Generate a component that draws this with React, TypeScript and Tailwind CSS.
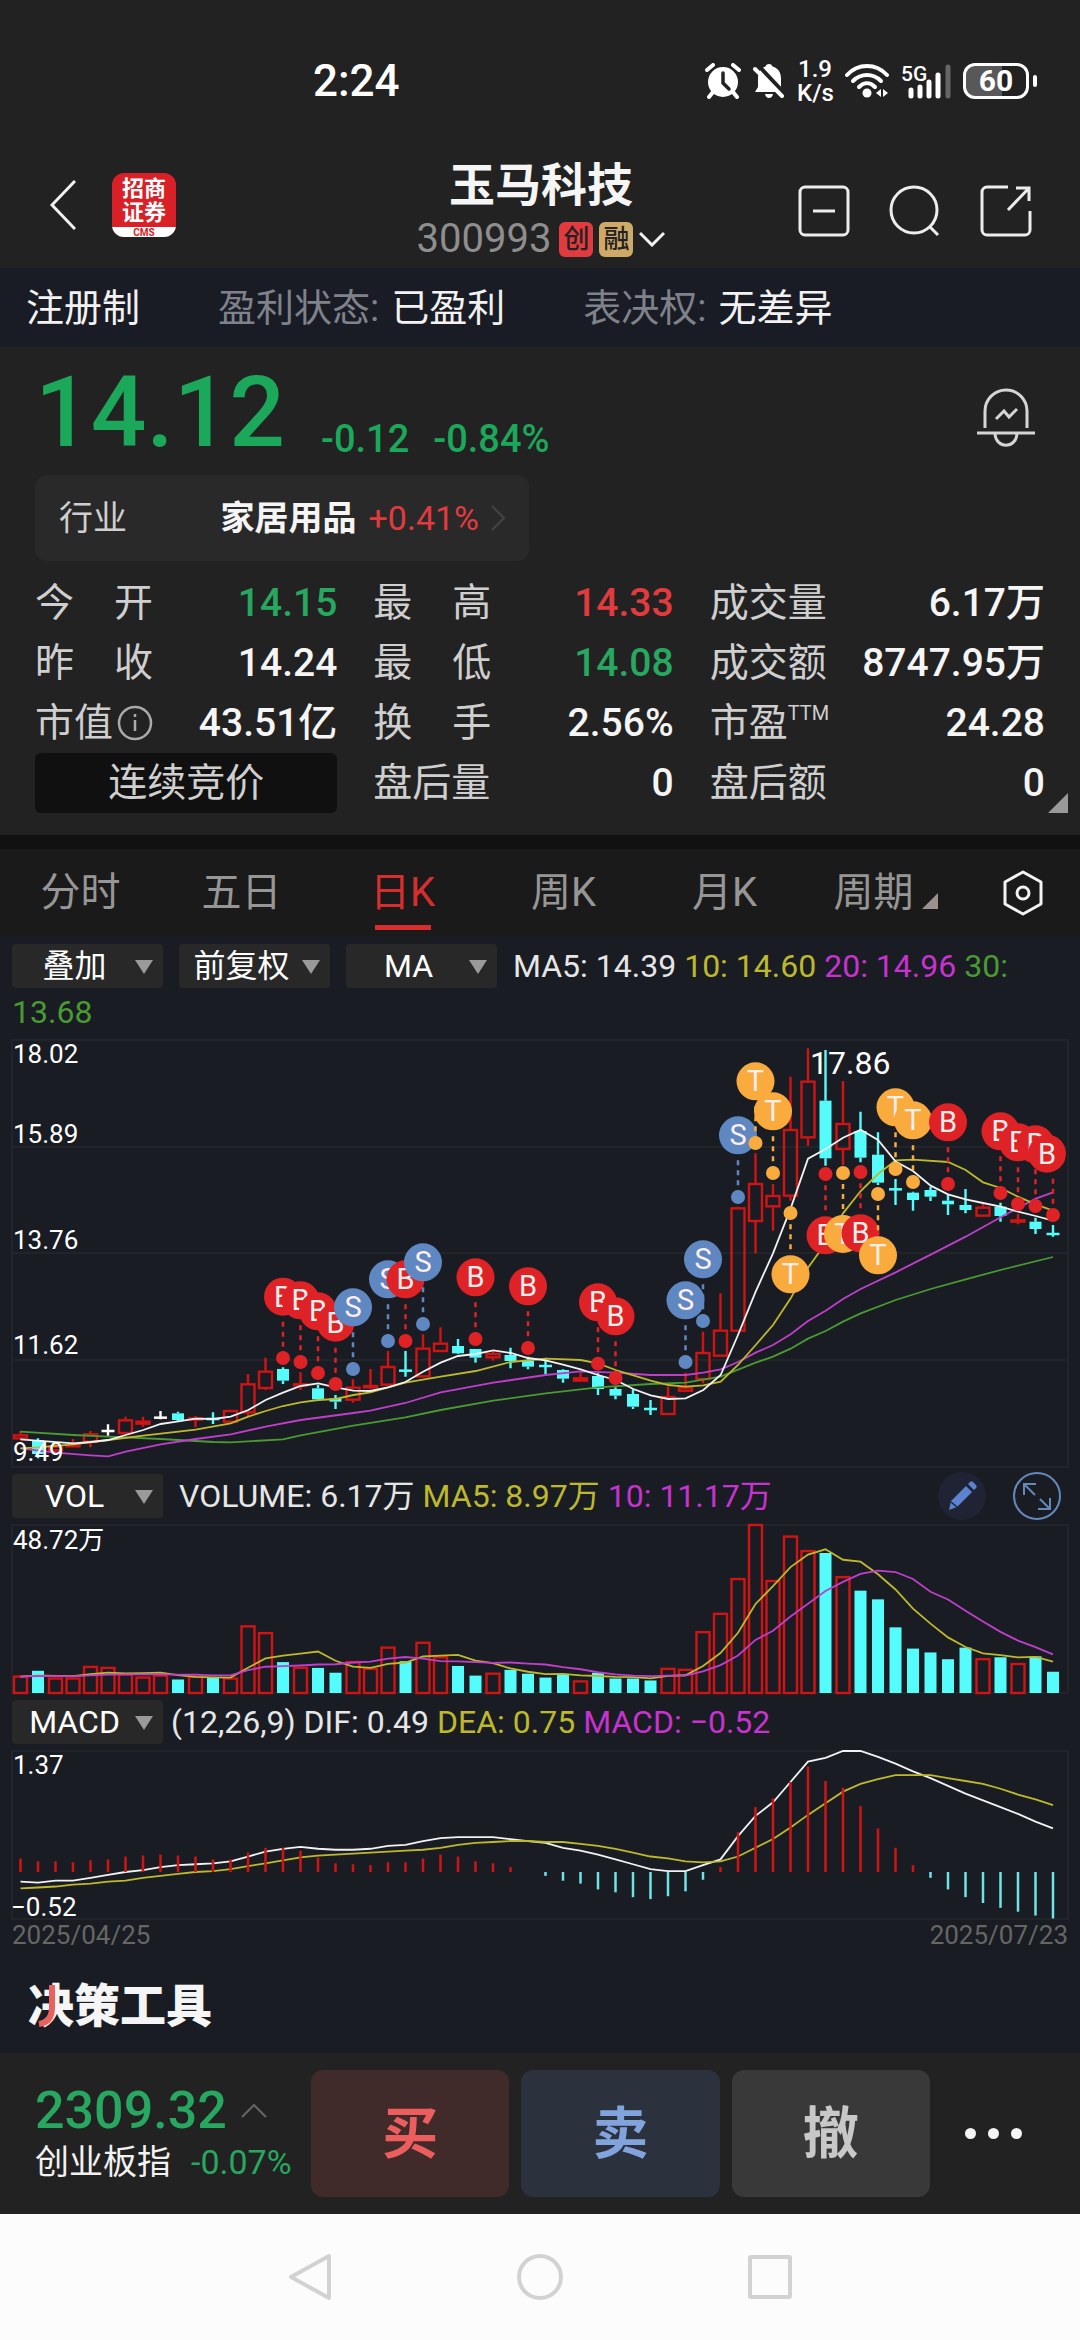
import type { ReactNode } from "react";

type Candle = [type: "up" | "down" | "flat", high: number, top: number, bottom: number, low: number];
type Point = [x: number, y: number];

const STEP = 17.5;
const barX = (i: number) => 20.5 + STEP * i;

// Candle levels are in thirds of a chart unit, measured from the top of the pane.
const candles: Candle[] = [
  ["up", 1203, 1213, 1228, 1230], ["down", 1225, 1230, 1272, 1285], ["up", 1240, 1247, 1264, 1270],
  ["up", 1227, 1243, 1247, 1250], ["up", 1203, 1210, 1238, 1252], ["flat", 1183, 1203, 1203, 1217],
  ["up", 1160, 1168, 1212, 1212], ["up", 1160, 1172, 1184, 1190], ["flat", 1143, 1163, 1163, 1168],
  ["down", 1145, 1150, 1170, 1176], ["up", 1158, 1162, 1172, 1192], ["down", 1147, 1167, 1167, 1182],
  ["up", 1140, 1140, 1178, 1178], ["up", 1032, 1060, 1150, 1158], ["up", 983, 1022, 1077, 1080],
  ["down", 1012, 1017, 1052, 1062], ["up", 1027, 1060, 1068, 1080], ["down", 1065, 1075, 1108, 1112],
  ["down", 1095, 1105, 1115, 1137], ["up", 1048, 1070, 1112, 1118], ["up", 1017, 1065, 1075, 1078],
  ["up", 963, 1008, 1067, 1067], ["down", 963, 1022, 1022, 1040], ["up", 913, 953, 1042, 1042],
  ["up", 892, 938, 966, 966], ["down", 927, 948, 970, 972], ["down", 957, 957, 983, 998],
  ["up", 965, 969, 985, 992], ["down", 953, 975, 993, 1015], ["down", 980, 992, 1010, 1018],
  ["down", 990, 1008, 1008, 1033], ["down", 1018, 1020, 1046, 1058], ["up", 1028, 1042, 1055, 1055],
  ["down", 1030, 1038, 1077, 1095], ["down", 1072, 1077, 1097, 1108], ["down", 1078, 1092, 1130, 1137],
  ["down", 1110, 1137, 1137, 1155], ["up", 1070, 1098, 1155, 1155], ["up", 1028, 1070, 1085, 1085],
  ["up", 905, 966, 1050, 1060], ["up", 790, 899, 980, 980], ["up", 530, 532, 905, 905],
  ["up", 370, 459, 576, 670], ["up", 462, 495, 532, 602], ["up", 140, 297, 500, 512],
  ["up", 55, 152, 325, 347], ["down", 60, 212, 385, 407], ["up", 153, 279, 360, 405],
  ["down", 245, 303, 383, 397], ["down", 307, 374, 458, 465], ["down", 447, 478, 478, 525],
  ["down", 485, 488, 510, 542], ["down", 470, 480, 500, 513], ["down", 495, 512, 523, 555],
  ["down", 477, 525, 540, 550], ["up", 522, 530, 560, 560], ["down", 518, 530, 558, 575],
  ["up", 552, 568, 578, 583], ["down", 563, 575, 597, 612], ["down", 585, 612, 612, 620],
];

const movingAverages: { color: string; points: Point[] }[] = [
  {
    color: "#4a9a32",
    points: [
      [61, 1205], [220, 1215], [325, 1220], [482, 1227], [640, 1236], [692, 1237], [849, 1228], [902, 1216],
      [1060, 1187], [1216, 1162], [1322, 1140], [1480, 1112], [1637, 1090], [1794, 1072], [1952, 1062],
      [2057, 1058], [2162, 1040], [2267, 998], [2319, 980], [2372, 956], [2424, 926], [2477, 903],
      [2529, 875], [2582, 850], [2687, 810], [2792, 777], [2897, 748], [3002, 720], [3159, 681],
    ],
  },
  {
    color: "#bf3fcb",
    points: [
      [61, 1255], [166, 1268], [272, 1276], [325, 1279], [377, 1265], [482, 1243], [587, 1227], [692, 1213],
      [797, 1190], [902, 1170], [1060, 1149], [1111, 1142], [1216, 1119], [1322, 1087], [1480, 1058],
      [1637, 1035], [1742, 1024], [1847, 1028], [1952, 1035], [2057, 1035], [2110, 1028], [2162, 1018],
      [2214, 996], [2267, 968], [2319, 945], [2372, 913], [2424, 873], [2477, 842], [2529, 807],
      [2582, 777], [2687, 727], [2792, 674], [2897, 620], [3002, 562], [3107, 506], [3159, 487],
    ],
  },
  {
    color: "#bdb92b",
    points: [
      [61, 1255], [114, 1252], [220, 1243], [325, 1230], [430, 1217], [587, 1199], [692, 1180], [745, 1160],
      [797, 1143], [849, 1128], [902, 1117], [955, 1110], [1007, 1107], [1060, 1095], [1111, 1087],
      [1216, 1058], [1322, 1040], [1427, 1023], [1532, 996], [1637, 986], [1742, 990], [1794, 1000],
      [1847, 1020], [1900, 1036], [1952, 1052], [2005, 1065], [2057, 1070], [2110, 1066], [2162, 1055],
      [2214, 1005], [2267, 945], [2319, 885], [2372, 805], [2424, 713], [2477, 640], [2529, 550],
      [2582, 483], [2634, 432], [2687, 391], [2739, 389], [2844, 396], [2897, 420], [2949, 457],
      [3002, 474], [3054, 500], [3107, 523], [3159, 542],
    ],
  },
  {
    color: "#f2f2f2",
    points: [
      [61, 1228], [220, 1240], [272, 1236], [325, 1230], [377, 1215], [430, 1200], [482, 1182], [535, 1174],
      [587, 1166], [640, 1167], [692, 1160], [745, 1140], [797, 1110], [849, 1088], [902, 1068], [955, 1060],
      [1007, 1072], [1060, 1082], [1111, 1083], [1164, 1072], [1216, 1056], [1269, 1025], [1322, 998],
      [1374, 978], [1427, 972], [1480, 961], [1532, 969], [1584, 984], [1637, 991], [1689, 1004],
      [1742, 1018], [1794, 1035], [1847, 1050], [1900, 1077], [1952, 1096], [2005, 1107], [2057, 1105],
      [2110, 1080], [2162, 1035], [2214, 915], [2267, 785], [2319, 670], [2372, 535], [2424, 386],
      [2477, 357], [2529, 323], [2582, 299], [2634, 330], [2687, 395], [2739, 423], [2792, 467],
      [2844, 493], [2897, 508], [2949, 519], [3002, 530], [3054, 545], [3107, 558], [3159, 572],
    ],
  },
];

const markerColors = { B: "#df2225", S: "#5f88c2", T: "#f9ab3e" };

// B = bought, S = sold, T = both on the same day
const markers: [kind: "B" | "S" | "T", index: number, badge: number, dot: number][] = [
  ["B", 15, 800, 984], ["B", 16, 811, 996], ["B", 17, 844, 1029], ["B", 18, 878, 1062], ["S", 19, 832, 1017],
  ["S", 21, 748, 933], ["B", 22, 748, 933], ["S", 23, 697, 882], ["B", 26, 742, 927], ["B", 29, 769, 954],
  ["B", 33, 817, 1001], ["B", 34, 859, 1044], ["S", 38, 811, 996], ["S", 39, 688, 873], ["S", 41, 316, 501],
  ["T", 42, 154, 339], ["T", 43, 244, 429], ["T", 44, 733, 549], ["B", 46, 616, 432], ["T", 47, 612, 429],
  ["B", 48, 610, 426], ["T", 49, 676, 492], ["T", 50, 232, 417], ["T", 51, 271, 456], ["B", 53, 277, 462],
  ["B", 56, 304, 489], ["B", 57, 337, 522], ["B", 58, 343, 528], ["B", 59, 371, 555],
];

const volumes = [
  17, 23, 15, 15, 27, 26, 19, 16, 18, 14, 17, 16, 15, 69, 62, 32, 26, 26, 21, 32,
  25, 47, 33, 52, 37, 28, 18, 20, 24, 20, 16, 19, 12, 21, 15, 15, 13, 25, 24, 63,
  82, 118, 174, 116, 162, 147, 145, 120, 106, 97, 68, 46, 42, 35, 47, 35, 37, 30, 38, 22,
];

const macdBars = [
  14, 11, 11, 10, 12, 13, 16, 17, 18, 17, 16, 13, 13, 20, 25, 25, 22, 15, 9, 8,
  7, 10, 10, 14, 18, 16, 11, 9, 5, 0, -4, -9, -12, -18, -21, -26, -28, -25, -20, -8,
  5, 41, 67, 76, 93, 109, 94, 87, 68, 45, 25, 7, -6, -18, -26, -32, -37, -41, -45, -48,
];

const difLine = [
  -10, -11, -9, -9, -6, -3, 0, 2, 5, 7, 8, 9, 11, 16, 21, 24, 26, 24, 23, 23,
  24, 27, 28, 32, 35, 36, 36, 36, 34, 32, 30, 25, 22, 18, 13, 8, 3, 1, 1, 7,
  13, 37, 58, 72, 93, 114, 118, 125, 125, 119, 112, 104, 97, 89, 81, 74, 67, 60, 52, 45,
];

const deaLine = [
  -17, -16, -15, -13, -12, -10, -9, -6, -4, -2, 0, 1, 3, 6, 9, 12, 15, 17, 18, 19,
  20, 21, 22, 23, 25, 28, 30, 31, 32, 32, 31, 31, 29, 27, 24, 20, 16, 14, 11, 10,
  11, 16, 25, 34, 46, 59, 71, 83, 91, 96, 100, 100, 100, 97, 94, 91, 86, 80, 75, 69,
];

function average(values: number[], window: number) {
  const padded = [...Array(window - 1).fill(17), ...values];
  return values.map((_, i) => padded.slice(i, i + window).reduce((a, b) => a + b, 0) / window);
}

const toPolyline = (ys: number[]) => ys.map((y, i) => `${barX(i)},${y}`).join(" ");

function StatusBar() {
  return (
    <div className="flex h-[162px] items-center justify-between pl-[313px] pr-[43px] text-white">
      <span className="text-[44px] font-medium leading-none">2:24</span>
      <div className="flex items-center">
        <svg viewBox="0 0 36 36" className="mr-3 h-9 w-9" aria-hidden="true">
          <circle cx="18" cy="19" r="15" fill="#fff" />
          <path d="M2 7 8 2M34 7 28 2" stroke="#fff" strokeWidth="4" strokeLinecap="round" />
          <path d="M8 29 4 34M28 29 32 34" stroke="#fff" strokeWidth="4" strokeLinecap="round" />
          <path d="M18 10v10l6 6" stroke="#222" strokeWidth="3.5" fill="none" strokeLinecap="round" />
        </svg>
        <svg viewBox="0 0 32 36" className="mr-3 h-9 w-8" aria-hidden="true">
          <path d="M16 1c2 0 3 1 3.500 2.500C26 5.500 28 10 28 16v8l2 5H2l3-5v-8C5 9 8 5 12.500 3.500 13 2 14 1 16 1Z" fill="#fff" />
          <path d="M12 31h8c-.5 2.500-2 4-4 4s-3.500-1.500-4-4Z" fill="#fff" />
          <path d="M4 1 32 31" stroke="#222" strokeWidth="4" />
          <path d="M2 6 29 33" stroke="#fff" strokeWidth="4" strokeLinecap="round" />
        </svg>
        <span className="mr-3 flex w-9 flex-col text-center text-[24px] font-medium leading-6">
          <span>1.9</span>
          <span>K/s</span>
        </span>
        <svg viewBox="0 0 44 36" className="mr-3 h-9 w-11" aria-hidden="true">
          <g fill="none" stroke="#fff" strokeWidth="4" strokeLinecap="round">
            <path d="M2 12C13 0 31 0 42 12" />
            <path d="M8 18c8-8 20-8 28 0" />
            <path d="M14 24c5-5 11-5 16 0" />
          </g>
          <circle cx="22" cy="30" r="4.500" fill="#fff" />
          <path d="m36 26-5 4 5 4ZM38 26l5 4-5 4Z" fill="#fff" />
        </svg>
        <svg viewBox="0 0 50 36" className="mr-3 h-9 w-[50px]" aria-hidden="true">
          <text x="0" y="18" fontSize="21" fontWeight="500" fill="#fff">5G</text>
          <path d="M10 27v6M19 24v9M28 19v14M37 12v21" stroke="#fff" strokeWidth="5" strokeLinecap="round" />
          <path d="M47 4v29" stroke="#666" strokeWidth="5" strokeLinecap="round" />
        </svg>
        <span className="flex h-9 w-[66px] items-center justify-center rounded-xl border-[3px] border-white bg-linear-to-r from-[#585858] from-60% to-transparent to-60% text-[30px] font-bold leading-none">
          60
        </span>
        <span className="ml-1 h-3 w-1 rounded-sm bg-white" />
      </div>
    </div>
  );
}

function Header() {
  return (
    <header className="flex h-[106px] items-center pb-2 pl-[50px] pr-[48px]">
      <div className="-mt-3 flex flex-1 items-center gap-9">
        <button aria-label="返回">
          <svg viewBox="0 0 26 50" className="block h-[50px] w-[26px]" fill="none" stroke="#f2f2f2" strokeWidth="3">
            <path d="M25 1 2 25l23 24" />
          </svg>
        </button>
        <div className="flex h-16 w-16 flex-col items-center overflow-hidden rounded-xl bg-[#d92027] text-center font-bold text-white">
          <span className="mt-1 text-[22px] leading-6">招商</span>
          <span className="text-[22px] leading-6">证券</span>
          <span className="mt-0.5 w-full bg-white text-[10px] leading-3 text-[#d92027]">CMS</span>
        </div>
      </div>
      <div className="flex flex-col items-center">
        <h1 className="text-[46px] font-bold leading-[52px] text-[#f5f5f5]">玉马科技</h1>
        <button className="mt-1 flex items-center text-[40px] leading-[48px] text-[#8e8e8e]">
          300993
          <span className="ml-2 flex h-[35px] w-[34px] items-center justify-center rounded-md bg-[#e23b3f] text-[26px] font-medium text-[#222]">创</span>
          <span className="ml-1.5 flex h-[35px] w-[34px] items-center justify-center rounded-md bg-[#cfa968] text-[26px] font-medium text-[#222]">融</span>
          <svg viewBox="0 0 26 16" className="ml-1.5 h-4 w-[26px]" fill="none" stroke="#f2f2f2" strokeWidth="3">
            <path d="m1 2 12 12L25 2" />
          </svg>
        </button>
      </div>
      <div className="flex flex-1 items-center justify-end gap-[39px]">
        <button aria-label="删除自选">
          <svg viewBox="0 0 52 52" className="block size-[52px]" fill="none" stroke="#ededed" strokeWidth="3">
            <rect x="2" y="2" width="48" height="48" rx="5" />
            <path d="M15 26h22" />
          </svg>
        </button>
        <button aria-label="搜索">
          <svg viewBox="0 0 52 52" className="block size-[52px]" fill="none" stroke="#ededed" strokeWidth="3">
            <circle cx="25" cy="25" r="23" />
            <path d="m40 41 9 9" />
          </svg>
        </button>
        <button aria-label="分享">
          <svg viewBox="0 0 52 52" className="block size-[52px]" fill="none" stroke="#ededed" strokeWidth="3">
            <path d="M28 2H7a5 5 0 0 0-5 5v38a5 5 0 0 0 5 5h38a5 5 0 0 0 5-5V26" />
            <path d="M36 3h13v13M49 3 28 25" />
          </svg>
        </button>
      </div>
    </header>
  );
}

function ListingInfo() {
  return (
    <div className="flex h-[79px] items-center bg-[#191c24] pl-[26px] text-[38px] leading-none text-[#f2f2f2]">
      <span>注册制</span>
      <span className="ml-[78px] text-[#7f828a]">盈利状态:</span>
      <span className="ml-3">已盈利</span>
      <span className="ml-[78px] text-[#7f828a]">表决权:</span>
      <span className="ml-3">无差异</span>
    </div>
  );
}

function Stat({ label, value, tone = "text-[#f5f5f5]" }: { label: ReactNode; value: string; tone?: string }) {
  return (
    <div className="flex h-[60px] items-center justify-between">
      <dt className="flex w-[118px] shrink-0 items-center justify-between whitespace-nowrap text-[#cfcfcf]">{label}</dt>
      <dd className={`whitespace-nowrap font-medium ${tone}`}>{value}</dd>
    </div>
  );
}

const spread = (a: string, b: string) => (
  <>
    <span>{a}</span>
    <span>{b}</span>
  </>
);

function Quote() {
  return (
    <section className="relative h-[488px] px-[35px] pt-4">
      <div className="flex items-start justify-between">
        <div className="flex items-end font-medium leading-[40px] text-[#1ba85a]">
          <span className="text-[98px] leading-[100px]">14.12</span>
          <span className="ml-9 pb-1 text-[38px]">-0.12</span>
          <span className="ml-6 pb-1 text-[38px]">-0.84%</span>
        </div>
        <button aria-label="价格提醒" className="mr-[10px] mt-6">
          <svg viewBox="0 0 58 60" className="block h-[60px] w-[58px]" fill="none" stroke="#d5d5d5" strokeWidth="3">
            <path d="M8 41V24a21 21 0 0 1 42 0v17" />
            <path d="M0 46h58" />
            <path d="M18 47c1 15 21 15 22 0" />
            <path d="m19 32 8-8 5 6 8-8" />
          </svg>
        </button>
      </div>
      <a href="#industry" className="mt-3 flex h-[86px] w-[494px] items-center rounded-xl bg-[#292929] px-6 text-[34px]">
        <span className="text-[#cfcfcf]">行业</span>
        <span className="ml-auto font-bold text-[#f5f5f5]">家居用品</span>
        <span className="ml-3 text-[#e23b3f]">+0.41%</span>
        <svg viewBox="0 0 14 26" className="ml-3 h-[26px] w-3.5" fill="none" stroke="#444" strokeWidth="2">
          <path d="m1 1 12 12L1 25" />
        </svg>
      </a>
      <dl className="mt-3 grid grid-cols-[302fr_300fr_335fr] gap-x-9 text-[39px] leading-none">
        <Stat label={spread("今", "开")} value="14.15" tone="text-[#27a75f]" />
        <Stat label={spread("最", "高")} value="14.33" tone="text-[#e23b3f]" />
        <Stat label="成交量" value="6.17万" />
        <Stat label={spread("昨", "收")} value="14.24" />
        <Stat label={spread("最", "低")} value="14.08" tone="text-[#27a75f]" />
        <Stat label="成交额" value="8747.95万" />
        <Stat
          label={
            <>
              市值
              <svg viewBox="0 0 36 36" className="ml-1 size-9 shrink-0" fill="none" stroke="#aaa" strokeWidth="2.500">
                <circle cx="18" cy="18" r="16" />
                <path d="M18 15v11M18 9v3" />
              </svg>
            </>
          }
          value="43.51亿"
        />
        <Stat label={spread("换", "手")} value="2.56%" />
        <Stat
          label={
            <span>
              市盈<sup className="-top-4 text-[20px]">TTM</sup>
            </span>
          }
          value="24.28"
        />
        <div className="flex h-[60px] items-center justify-center rounded-md bg-[#101010] text-[#cfcfcf]">连续竞价</div>
        <Stat label="盘后量" value="0" />
        <Stat label="盘后额" value="0" />
      </dl>
      <svg viewBox="0 0 20 20" className="absolute bottom-[22px] right-3 size-5" aria-hidden="true">
        <path d="M20 0v20H0Z" fill="#999" />
      </svg>
    </section>
  );
}

function Tabs() {
  const tabs = ["分时", "五日", "日K", "周K", "月K", "周期"];
  return (
    <nav className="flex h-[87px] items-stretch bg-[#1a1a1a] text-[40px] text-[#969696]">
      {tabs.map((tab) => {
        const active = tab === "日K";
        return (
          <button key={tab} className={`relative flex flex-[161] items-center justify-center ${active ? "text-[#d62e2e]" : ""}`}>
            {tab}
            {tab === "周期" && (
              <svg viewBox="0 0 16 16" className="ml-2 mt-4 size-4" aria-hidden="true">
                <path d="M16 0v16H0Z" fill="#9c9090" />
              </svg>
            )}
            {active && <span className="absolute bottom-1.5 h-[5px] w-14 bg-[#d62e2e]" />}
          </button>
        );
      })}
      <button aria-label="设置" className="flex flex-[114] items-center justify-center">
        <svg viewBox="0 0 42 46" className="h-[46px] w-[42px]" fill="none" stroke="#f2f2f2" strokeWidth="3">
          <path d="m21 2 18 10v22L21 44 3 34V12Z" strokeLinejoin="round" />
          <circle cx="21" cy="23" r="6" />
        </svg>
      </button>
    </nav>
  );
}

function Picker({ label, options }: { label: string; options: string[] }) {
  return (
    <span className="relative inline-block h-11 w-[151px] shrink-0">
      <select
        aria-label={label}
        className="h-full w-full appearance-none rounded bg-[#282828] pr-[26px] text-center text-[32px] leading-none text-white [text-align-last:center]"
      >
        {options.map((option) => (
          <option key={option}>{option}</option>
        ))}
      </select>
      <svg viewBox="0 0 18 14" className="pointer-events-none absolute right-2.5 top-4 h-3.5 w-[18px]" aria-hidden="true">
        <path d="M0 0h18L9 14Z" fill="#9a9a9a" />
      </svg>
    </span>
  );
}

function Frame({ top, bottom }: { top: number; bottom: number }) {
  return <rect x="12" y={top} width="1056" height={bottom - top} fill="none" stroke="#24272c" strokeWidth="1.500" />;
}

function PriceChart() {
  return (
    <svg viewBox="0 0 1080 440" className="block w-full" role="img" aria-label="日K线">
      <Frame top={10} bottom={437} />
      <path d="M12 117H1068M12 223H1068M12 330H1068" stroke="#24272c" strokeWidth="1.500" />
      {candles.map(([type, high, top, bottom, low], i) => {
        const x = barX(i);
        const color = type === "up" ? "#d01414" : type === "down" ? "#54fcfc" : "#fff";
        const wick = `M${x} ${high / 3}V${top / 3}M${x} ${bottom / 3}V${low / 3}`;
        return (
          <g key={i} stroke={color} strokeWidth="2.400">
            <path d={wick} />
            {bottom - top < 4 ? (
              <path d={`M${x - 6.5} ${top / 3}h13`} strokeWidth="2.500" />
            ) : type === "up" ? (
              <rect x={x - 6.5} y={top / 3 + 1} width="13" height={Math.max((bottom - top) / 3 - 2, 1)} fill="none" />
            ) : (
              <rect x={x - 6} y={top / 3} width="12" height={(bottom - top) / 3} fill={color} stroke="none" />
            )}
          </g>
        );
      })}
      {movingAverages.map(({ color, points }) => (
        <polyline
          key={color}
          points={points.map(([x, y]) => `${x / 3},${y / 3}`).join(" ")}
          fill="none"
          stroke={color}
          strokeWidth="1.800"
        />
      ))}
      {markers.map(([kind, index, badge, dot]) => {
        const x = barX(index);
        const badgeX = Math.min(x, 1047); // stay inside the frame
        const from = badge / 3 + (dot > badge ? 25 : -25);
        return (
          <g key={index} fill={markerColors[kind]}>
            <path d={`M${x} ${from}V${dot / 3}`} stroke={markerColors[kind]} strokeWidth="2.500" strokeDasharray="5 5" />
            <circle cx={badgeX} cy={badge / 3} r="19" />
            <circle cx={x} cy={dot / 3} r="7" />
            <text x={badgeX} y={badge / 3 + 10} fontSize="29" textAnchor="middle" fill="#fdeeee">
              {kind}
            </text>
          </g>
        );
      })}
      <g fill="#fff" fontSize="26">
        <text x="13" y="33">18.02</text>
        <text x="13" y="113">15.89</text>
        <text x="13" y="219">13.76</text>
        <text x="13" y="324">11.62</text>
        <text x="13" y="431">9.49</text>
        <text x="810" y="44" fontSize="32">17.86</text>
      </g>
    </svg>
  );
}

function VolumeChart() {
  const scale = 168 / Math.max(...volumes);
  const base = 171;
  const toY = (v: number) => base - v * scale;
  return (
    <svg viewBox="0 0 1080 173" className="mt-1 block w-full" role="img" aria-label="成交量">
      <Frame top={3} bottom={base} />
      {volumes.map((volume, i) => {
        const x = barX(i);
        const up = candles[i][0] === "up" || candles[i][0] === "flat";
        return up ? (
          <rect key={i} x={x - 6.5} y={toY(volume)} width="13" height={volume * scale} fill="none" stroke="#d01414" strokeWidth="2.400" />
        ) : (
          <rect key={i} x={x - 6} y={toY(volume)} width="12" height={volume * scale} fill="#54fcfc" />
        );
      })}
      <polyline points={toPolyline(average(volumes, 5).map(toY))} fill="none" stroke="#bdb92b" strokeWidth="1.800" />
      <polyline points={toPolyline(average(volumes, 10).map(toY))} fill="none" stroke="#bf3fcb" strokeWidth="1.800" />
      <text x="13" y="27" fill="#fff" fontSize="26">48.72万</text>
    </svg>
  );
}

function MacdChart() {
  const scale = 121 / Math.max(...difLine);
  const zero = 125;
  const toY = (v: number) => zero - v * scale;
  return (
    <svg viewBox="0 0 1080 174" className="mt-[3px] block w-full" role="img" aria-label="MACD">
      <Frame top={4} bottom={172} />
      <polyline points={toPolyline(difLine.map(toY))} fill="none" stroke="#f2f2f2" strokeWidth="1.800" />
      <polyline points={toPolyline(deaLine.map(toY))} fill="none" stroke="#bdb92b" strokeWidth="1.800" />
      {macdBars.map((value, i) => (
        <path
          key={i}
          d={`M${barX(i)} ${zero}V${toY(value)}`}
          stroke={value > 0 ? "#d01414" : "#6fe3e6"}
          strokeWidth="2.500"
        />
      ))}
      <g fill="#fff" fontSize="26">
        <text x="13" y="27">1.37</text>
        <text x="11" y="169">−0.52</text>
      </g>
    </svg>
  );
}

function Charts() {
  return (
    <section className="bg-[#191c23] pt-2 text-[32px] leading-none">
      <div className="flex h-11 items-center pl-3">
        <div className="flex gap-4">
          <Picker label="叠加" options={["叠加"]} />
          <Picker label="复权" options={["前复权", "后复权", "不复权"]} />
          <Picker label="主图指标" options={["MA", "BOLL", "EXPMA"]} />
        </div>
        <p className="ml-4 flex gap-2 whitespace-nowrap">
          <span className="text-[#e6e6e6]">MA5: 14.39</span>
          <span className="text-[#bdb92b]">10: 14.60</span>
          <span className="text-[#c832cf]">20: 14.96</span>
          <span className="text-[#4a9a32]">30:</span>
        </p>
      </div>
      <p className="h-[42px] pl-3 leading-[48px] text-[#4a9a32]">13.68</p>
      <PriceChart />
      <div className="mt-1 flex h-11 items-center pl-3 pr-[19px]">
        <Picker label="副图指标一" options={["VOL", "OBV"]} />
        <p className="ml-4 flex gap-2 whitespace-nowrap">
          <span className="text-[#e6e6e6]">VOLUME: 6.17万</span>
          <span className="text-[#bdb92b]">MA5: 8.97万</span>
          <span className="text-[#c832cf]">10: 11.17万</span>
        </p>
        <button aria-label="画线" className="ml-auto">
          <svg viewBox="0 0 48 48" className="block size-12">
            <circle cx="24" cy="24" r="24" fill="#1f2333" />
            <path d="M11 38 13 29 28 14 34 20 19 35ZM30 12l2-2a2 2 0 0 1 3 0l3 3a2 2 0 0 1 0 3l-2 2Z" fill="#5b83d0" />
            <path d="m13 30 6 5" stroke="#1f2333" strokeWidth="1.500" />
          </svg>
        </button>
        <button aria-label="全屏" className="ml-[27px]">
          <svg viewBox="0 0 48 48" className="block size-12" fill="none" stroke="#6488b8" strokeWidth="2">
            <circle cx="24" cy="24" r="23" />
            <path d="M11 23V12h12M11 12l11 11M37 26v11H25M37 37 27 27" />
          </svg>
        </button>
      </div>
      <VolumeChart />
      <div className="mt-[5px] flex h-11 items-center pl-3">
        <Picker label="副图指标二" options={["MACD", "KDJ", "RSI"]} />
        <p className="ml-2 flex gap-2 whitespace-nowrap">
          <span className="text-[#e6e6e6]">(12,26,9) DIF: 0.49</span>
          <span className="text-[#bdb92b]">DEA: 0.75</span>
          <span className="text-[#c832cf]">MACD: −0.52</span>
        </p>
      </div>
      <MacdChart />
      <div className="flex justify-between px-3 text-[26px] leading-7 text-[#666]">
        <time>2025/04/25</time>
        <time>2025/07/23</time>
      </div>
      <div className="h-[104px] pl-7 pt-[31px]">
        <h2 className="relative inline-block text-[46px] font-black leading-[52px] text-[#f5f5f5]">
          决策工具
          <svg viewBox="0 0 20 44" className="absolute left-2.5 top-1 h-11 w-5" aria-hidden="true">
            <path d="M14 1v22c0 10-4 16-13 17" fill="none" stroke="#e8605f" strokeWidth="6" />
          </svg>
        </h2>
      </div>
    </section>
  );
}

function TradeBar() {
  return (
    <footer className="flex h-[161px] items-center bg-[#222] pl-[35px]">
      <div className="w-[276px] shrink-0">
        <div className="flex items-center text-[52px] font-medium leading-[56px] text-[#27a75f]">
          2309.32
          <svg viewBox="0 0 26 14" className="ml-3.5 h-3.5 w-[26px]" fill="none" stroke="#666" strokeWidth="2">
            <path d="m1 13 12-12 12 12" />
          </svg>
        </div>
        <div className="flex items-center whitespace-nowrap text-[34px] leading-[46px] text-[#f2f2f2]">
          创业板指<span className="ml-5 text-[#27a75f]">-0.07%</span>
        </div>
      </div>
      <div className="flex flex-1 gap-3 text-[56px] font-bold">
        <button className="h-[127px] flex-1 rounded-xl bg-[#402b2a] text-[#ec5d5d]">买</button>
        <button className="h-[127px] flex-1 rounded-xl bg-[#2b313d] text-[#82a4dd]">卖</button>
        <button className="h-[127px] flex-1 rounded-xl bg-[#393939] text-[#c8c8c8]">撤</button>
      </div>
      <button aria-label="更多" className="flex w-[150px] justify-center gap-3 pr-6">
        <span className="size-[11px] rounded-full bg-[#f5f5f5]" />
        <span className="size-[11px] rounded-full bg-[#f5f5f5]" />
        <span className="size-[11px] rounded-full bg-[#f5f5f5]" />
      </button>
    </footer>
  );
}

function SystemNav() {
  return (
    <div className="flex h-[126px] items-center justify-center gap-[182px] bg-[#fcfcfc]">
      <button aria-label="后退">
        <svg viewBox="0 0 48 48" className="block size-12" fill="none" stroke="#d2d2d2" strokeWidth="4">
          <path d="M43 3v42L5 24Z" strokeLinejoin="round" />
        </svg>
      </button>
      <button aria-label="主页">
        <svg viewBox="0 0 48 48" className="block size-12" fill="none" stroke="#d2d2d2" strokeWidth="4">
          <circle cx="24" cy="24" r="21" />
        </svg>
      </button>
      <button aria-label="最近任务">
        <svg viewBox="0 0 48 48" className="block size-12" fill="none" stroke="#d2d2d2" strokeWidth="4">
          <rect x="4" y="4" width="40" height="40" rx="1" />
        </svg>
      </button>
    </div>
  );
}

export default function App() {
  return (
    <div className="min-h-screen bg-[#222] font-[Roboto,'Noto_Sans_CJK_SC',sans-serif]">
      <StatusBar />
      <Header />
      <ListingInfo />
      <Quote />
      <div className="h-3.5 bg-[#111]" />
      <Tabs />
      <Charts />
      <TradeBar />
      <SystemNav />
    </div>
  );
}
